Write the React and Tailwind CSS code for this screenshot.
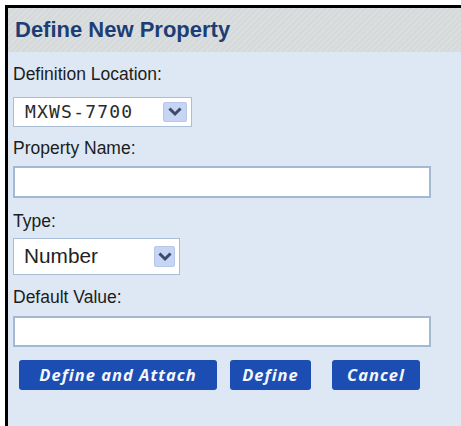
import React from 'react';

const Chevron = () => (
  <svg width="14" height="10" viewBox="0 0 14 10" className="block">
    <path d="M2.5 2.5l4.5 4.5 4.5-4.5" fill="none" stroke="#3b4a68" strokeWidth="3" strokeLinecap="square" />
  </svg>
);

const Select = ({ value, className, textClass, btnClass, mono }) => (
  <div className={`flex items-center justify-between bg-white border border-[#a9bed6] ${className}`}>
    <span
      className={textClass}
      style={mono ? { fontFamily: '"DejaVu Sans Mono", "Liberation Mono", monospace' } : undefined}
    >
      {value}
    </span>
    <span className={`flex items-center justify-center rounded-[2px] bg-[#c7d5f4] border border-[#b6c7ec] ${btnClass}`}>
      <Chevron />
    </span>
  </div>
);

const Label = ({ children, className = '' }) => (
  <div className={`text-[17.5px] leading-[20px] text-[#1c1c1c] ${className}`}>{children}</div>
);

const Btn = ({ children, className = '' }) => (
  <button
    className={`h-[30px] rounded-[3px] bg-[#1b4db3] text-[#f4f6fb] italic font-bold text-[16.5px] tracking-[1px] ${className}`}
    style={{ fontFamily: '"Open Sans", "DejaVu Sans", sans-serif' }}
  >
    {children}
  </button>
);

export default function App() {
  return (
    <div
      className="w-[461px] h-[426px] bg-white pt-[5px] pl-[5px] overflow-hidden"
      style={{ fontFamily: '"Liberation Sans", Arial, sans-serif' }}
    >
      <div className="h-full border-t-[3px] border-l-[3px] border-black bg-[#dee8f5] flex flex-col">
        <div className="h-[44px] flex items-center pl-[7px] bg-[repeating-linear-gradient(135deg,#d6d9d9_0px,#d6d9d9_2px,#dbdede_2px,#dbdede_4px)]">
          <h1 className="text-[22px] font-bold text-[#1d3e74] leading-none">Define New Property</h1>
        </div>

        <div className="pl-[5px] flex flex-col">
          <Label className="mt-[12px]">Definition Location:</Label>
          <Select
            value="MXWS-7700"
            mono
            className="mt-[13px] w-[179px] h-[30px] pl-[11px] pr-[4px]"
            textClass="text-[18px] tracking-[1.2px] leading-none text-[#2a2a2a]"
            btnClass="w-[24px] h-[20px]"
          />
          <Label className="mt-[11px]">Property Name:</Label>
          <div className="mt-[8px] w-[418px] h-[32px] bg-white border-2 border-[#a3b8d2]" />
          <Label className="mt-[13px]">Type:</Label>
          <Select
            value="Number"
            className="mt-[7px] w-[167px] h-[37px] pl-[10px] pr-[4px]"
            textClass="text-[20.8px] leading-none text-[#222]"
            btnClass="w-[21px] h-[21px]"
          />
          <Label className="mt-[12px]">Default Value:</Label>
          <div className="mt-[9px] w-[418px] h-[31px] bg-white border-2 border-[#a3b8d2]" />
          <div className="mt-[13px] flex items-center pl-[6px]">
            <Btn className="w-[198px]">Define and Attach</Btn>
            <Btn className="w-[81px] ml-[13px]">Define</Btn>
            <Btn className="w-[88px] ml-[21px]">Cancel</Btn>
          </div>
        </div>
      </div>
    </div>
  );
}
